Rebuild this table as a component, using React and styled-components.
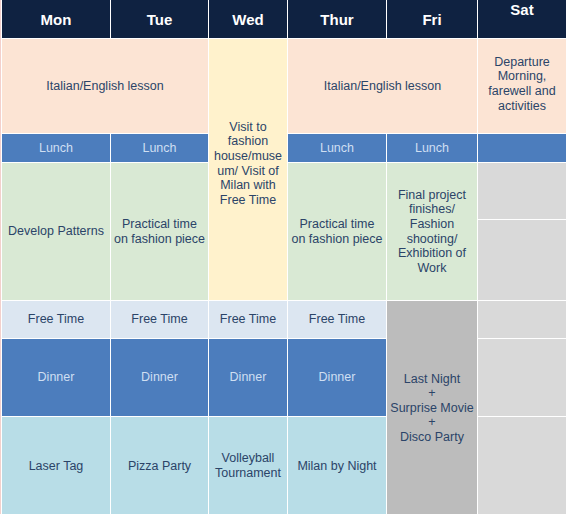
import React from 'react';
import styled, { createGlobalStyle } from 'styled-components';

const GlobalStyle = createGlobalStyle`
    body {
        margin: 0;
        background: #ffffff;
        font-family: "Liberation Sans", Arial, sans-serif;
    }
`;

const colors = {
    navy: '#0f2241',
    peach: '#fce4d4',
    yellow: '#fff2cc',
    blue: '#4c7dbd',
    green: '#d9e9d4',
    pale: '#dce6f1',
    cyan: '#b8dde7',
    grey: '#d9d9d9',
    darkGrey: '#bcbcbc',
};

const Timetable = styled.div`
    display: grid;
    grid-template-columns: 108px 97px 78px 98px 90px 88px;
    grid-template-rows: 38px 94px 28px 56px 80px 37px 77px 98px;
    gap: 1px;
    width: 565px;
    padding-left: 1px;
    background: #ffffff;
    border-left: 1px solid #f3d0cc;
    box-sizing: border-box;
`;

const DayHead = styled.div`
    display: flex;
    align-items: ${(p) => (p.$top ? 'flex-start' : 'center')};
    justify-content: center;
    padding-top: ${(p) => (p.$top ? '1px' : '0')};
    background: ${colors.navy};
    color: #ffffff;
    font-weight: bold;
    font-size: 15px;
`;

const Cell = styled.div`
    grid-column: ${(p) => p.$col};
    grid-row: ${(p) => p.$row};
    display: flex;
    align-items: center;
    justify-content: center;
    text-align: center;
    background: ${(p) => colors[p.$bg]};
    color: ${(p) => (p.$light ? '#cfdff2' : '#2b4468')};
    font-size: 12.5px;
    line-height: 14.6px;
    padding: ${(p) => p.$pad || '0'};
`;

const days = ['Mon', 'Tue', 'Wed', 'Thur', 'Fri', 'Sat'];

const Lines = ({ items }) => (
    <span>
        {items.map((line, i) => (
            <React.Fragment key={i}>
                {line}
                {i < items.length - 1 && <br />}
            </React.Fragment>
        ))}
    </span>
);

const App = () => {
    return (
        <>
            <GlobalStyle />
            <Timetable>
                {days.map((d) => (
                    <DayHead key={d} $top={d === 'Sat'}>{d}</DayHead>
                ))}

                {/* morning lessons */}
                <Cell $col="1 / 3" $row="2" $bg="peach">Italian/English lesson</Cell>
                <Cell $col="3" $row="2 / 6" $bg="yellow" $pad="0 0 12px">
                    <Lines items={['Visit to', 'fashion', 'house/muse', 'um/ Visit of', 'Milan with', 'Free Time']} />
                </Cell>
                <Cell $col="4 / 6" $row="2" $bg="peach">Italian/English lesson</Cell>
                <Cell $col="6" $row="2" $bg="peach" $pad="0 0 4px">
                    <Lines items={['Departure', 'Morning,', 'farewell and', 'activities']} />
                </Cell>

                {/* lunch */}
                <Cell $col="1" $row="3" $bg="blue" $light>Lunch</Cell>
                <Cell $col="2" $row="3" $bg="blue" $light>Lunch</Cell>
                <Cell $col="4" $row="3" $bg="blue" $light>Lunch</Cell>
                <Cell $col="5" $row="3" $bg="blue" $light>Lunch</Cell>
                <Cell $col="6" $row="3" $bg="blue" />

                {/* afternoon */}
                <Cell $col="1" $row="4 / 6" $bg="green">Develop Patterns</Cell>
                <Cell $col="2" $row="4 / 6" $bg="green">
                    <Lines items={['Practical time', 'on fashion piece']} />
                </Cell>
                <Cell $col="4" $row="4 / 6" $bg="green">
                    <Lines items={['Practical time', 'on fashion piece']} />
                </Cell>
                <Cell $col="5" $row="4 / 6" $bg="green">
                    <Lines items={['Final project', 'finishes/', 'Fashion', 'shooting/', 'Exhibition of', 'Work']} />
                </Cell>
                <Cell $col="6" $row="4" $bg="grey" />
                <Cell $col="6" $row="5" $bg="grey" />

                {/* free time */}
                <Cell $col="1" $row="6" $bg="pale">Free Time</Cell>
                <Cell $col="2" $row="6" $bg="pale">Free Time</Cell>
                <Cell $col="3" $row="6" $bg="pale">Free Time</Cell>
                <Cell $col="4" $row="6" $bg="pale">Free Time</Cell>
                <Cell $col="5" $row="6 / 9" $bg="darkGrey">
                    <Lines items={['Last Night', '+', 'Surprise Movie', '+', 'Disco Party']} />
                </Cell>
                <Cell $col="6" $row="6" $bg="grey" />

                {/* dinner */}
                <Cell $col="1" $row="7" $bg="blue" $light>Dinner</Cell>
                <Cell $col="2" $row="7" $bg="blue" $light>Dinner</Cell>
                <Cell $col="3" $row="7" $bg="blue" $light>Dinner</Cell>
                <Cell $col="4" $row="7" $bg="blue" $light>Dinner</Cell>
                <Cell $col="6" $row="7" $bg="grey" />

                {/* evening */}
                <Cell $col="1" $row="8" $bg="cyan">Laser Tag</Cell>
                <Cell $col="2" $row="8" $bg="cyan">Pizza Party</Cell>
                <Cell $col="3" $row="8" $bg="cyan">
                    <Lines items={['Volleyball', 'Tournament']} />
                </Cell>
                <Cell $col="4" $row="8" $bg="cyan">Milan by Night</Cell>
                <Cell $col="6" $row="8" $bg="grey" />
            </Timetable>
        </>
    );
};

export default App;
